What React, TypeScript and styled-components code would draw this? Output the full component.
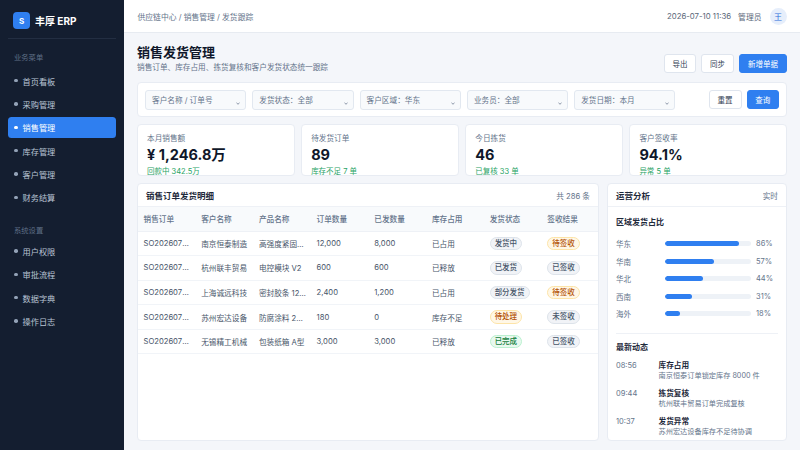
import React from 'react';
import styled, { createGlobalStyle } from 'styled-components';

const GlobalStyle = createGlobalStyle`
    html, body {
        margin: 0;
        padding: 0;
        height: 100%;
        background: #f4f6fa;
        font-family: "Inter", "Noto Sans CJK SC", sans-serif;
    }
    * { box-sizing: border-box; }
`;

const Shell = styled.div`
    display: flex;
    width: 800px;
    height: 450px;
    overflow: hidden;
`;

const Sidebar = styled.aside`
    width: 124px;
    flex: none;
    background: #141e30;
    padding: 0 8px;
`;

const Brand = styled.div`
    display: flex;
    align-items: center;
    gap: 5px;
    height: 39px;
    padding: 3px 0 0 5px;
    border-bottom: 1px solid #232e42;
    color: #fff;
    font-size: 10px;
    font-weight: 700;
`;

const LogoMark = styled.div`
    width: 17px;
    height: 17px;
    border-radius: 4px;
    background: #2f7ff0;
    color: #fff;
    font-size: 8px;
    display: flex;
    align-items: center;
    justify-content: center;
`;

const SectionLabel = styled.div<{ $top: number; $bottom: number }>`
    margin: ${p => p.$top}px 0 ${p => p.$bottom}px 6px;
    height: 12px;
    line-height: 12px;
    font-size: 7.3px;
    color: #5f6f86;
`;

const NavItem = styled.div<{ $active?: boolean }>`
    display: flex;
    align-items: center;
    gap: 5px;
    height: 21px;
    margin-bottom: 2.4px;
    padding-left: 6px;
    border-radius: 3.5px;
    font-size: 8.2px;
    color: ${p => (p.$active ? '#fff' : '#b9c4d4')};
    background: ${p => (p.$active ? '#2f7ff0' : 'transparent')};

    &::before {
        content: "";
        width: 3.5px;
        height: 3.5px;
        border-radius: 50%;
        background: ${p => (p.$active ? '#fff' : '#94a3b8')};
    }
`;

const Content = styled.div`
    flex: 1;
    min-width: 0;
    display: flex;
    flex-direction: column;
`;

const Topbar = styled.header`
    height: 33px;
    flex: none;
    background: #fff;
    border-bottom: 1px solid #e7ebf1;
    display: flex;
    align-items: center;
    padding: 0 13.5px;
    font-size: 7.8px;
    color: #64748b;
`;

const Crumbs = styled.div`
    flex: 1;
`;

const TopMeta = styled.span`
    margin-right: 7px;
    color: #5b6779;
`;

const Avatar = styled.div`
    width: 17px;
    height: 17px;
    margin-left: 1px;
    border-radius: 50%;
    background: #e6eefb;
    color: #2f6fdc;
    font-size: 8px;
    display: flex;
    align-items: center;
    justify-content: center;
`;

const Main = styled.main`
    flex: 1;
    min-height: 0;
    padding: 9px 13px 9px;
    display: flex;
    flex-direction: column;
`;

const TitleRow = styled.div`
    display: flex;
    justify-content: space-between;
    align-items: flex-end;
    height: 31px;
    flex: none;
    margin-bottom: 9px;
`;

const PageTitle = styled.h1`
    margin: 0 0 1px;
    font-size: 13px;
    line-height: 20px;
    font-weight: 700;
    color: #0f172a;
`;

const PageSub = styled.div`
    font-size: 7.65px;
    line-height: 10px;
    color: #64748b;
`;

const ButtonRow = styled.div`
    display: flex;
    gap: 5px;
`;

const Button = styled.div<{ $primary?: boolean; $w: number }>`
    width: ${p => p.$w}px;
    height: 19px;
    border-radius: 3px;
    border: 1px solid ${p => (p.$primary ? '#2f7ff0' : '#dfe5ee')};
    background: ${p => (p.$primary ? '#2f7ff0' : '#fff')};
    color: ${p => (p.$primary ? '#fff' : '#334155')};
    font-size: 7.5px;
    display: flex;
    align-items: center;
    justify-content: center;
`;

const Card = styled.section`
    background: #fff;
    border: 1px solid #e8ecf3;
    border-radius: 4px;
`;

const FilterBar = styled(Card)`
    height: 35px;
    flex: none;
    margin-bottom: 7px;
    padding: 0 7px;
    display: flex;
    align-items: center;
    gap: 6px;
`;

const Select = styled.div`
    width: 101.3px;
    height: 20px;
    padding: 0 5px 0 6px;
    background: #f8fafc;
    border: 1px solid #e2e8f0;
    border-radius: 3px;
    font-size: 7.65px;
    color: #64748b;
    display: flex;
    align-items: center;
    justify-content: space-between;

    svg {
        align-self: flex-end;
        margin-bottom: 4px;
    }
`;

const FilterActions = styled.div`
    margin-left: auto;
    display: flex;
    gap: 5px;
`;

const StatRow = styled.div`
    display: grid;
    grid-template-columns: repeat(4, 1fr);
    gap: 6.5px;
    height: 52px;
    flex: none;
    margin-bottom: 7px;
`;

const StatCard = styled(Card)`
    padding: 8.5px 9px 0;
    overflow: hidden;
`;

const StatLabel = styled.div`
    font-size: 7.65px;
    line-height: 10px;
    color: #64748b;
`;

const StatValue = styled.div`
    margin-top: 1.5px;
    font-size: 14.5px;
    line-height: 20px;
    font-weight: 700;
    color: #0f172a;
`;

const StatNote = styled.div`
    margin-top: 1.5px;
    font-size: 7.5px;
    line-height: 10px;
    color: #1fa365;
`;

const Lower = styled.div`
    flex: 1;
    min-height: 0;
    display: grid;
    grid-template-columns: 462px 180px;
    gap: 8px;
`;

const Panel = styled(Card)`
    overflow: hidden;
    display: flex;
    flex-direction: column;
`;

const PanelHead = styled.div`
    height: 23px;
    flex: none;
    display: flex;
    align-items: center;
    justify-content: space-between;
    padding: 0 8px;
    border-bottom: 1px solid #eef1f6;
    font-size: 7.65px;
    color: #64748b;
`;

const PanelTitle = styled.div`
    font-size: 8.5px;
    font-weight: 700;
    color: #1e293b;
`;

const Table = styled.table`
    width: 461.6px;
    flex: none;
    table-layout: fixed;
    border-collapse: collapse;
    font-size: 7.65px;
`;

const Th = styled.th`
    height: 24px;
    padding: 0 5px 0 5.5px;
    text-align: left;
    font-weight: 500;
    color: #64748b;
    background: #f8fafc;
    border-bottom: 1px solid #eef1f6;
`;

const Td = styled.td`
    height: 24.6px;
    padding: 0 5px 0 5.5px;
    color: #475569;
    border-bottom: 1px solid #f1f4f8;
    white-space: nowrap;
    overflow: hidden;
    text-overflow: ellipsis;
`;

const pillTones = {
    gray: { bg: '#f1f3f7', line: '#dde3ea', fg: '#475569' },
    amber: { bg: '#fff7e6', line: '#fde4a8', fg: '#b45309' },
    green: { bg: '#e8f9ef', line: '#bbf0cf', fg: '#15803d' },
};

type Tone = keyof typeof pillTones;

const Pill = styled.span<{ $tone: Tone }>`
    display: inline-block;
    height: 13.5px;
    line-height: 11.5px;
    padding: 0 4px;
    border-radius: 7px;
    font-size: 7.5px;
    font-weight: 500;
    background: ${p => pillTones[p.$tone].bg};
    border: 1px solid ${p => pillTones[p.$tone].line};
    color: ${p => pillTones[p.$tone].fg};
`;

const PanelBody = styled.div`
    padding: 9.5px 8px 0;
`;

const SubTitle = styled.div`
    font-size: 8px;
    line-height: 11px;
    font-weight: 700;
    color: #1e293b;
`;

const BarList = styled.div`
    margin-top: 7.5px;
    padding-bottom: 10px;
    border-bottom: 1px solid #eef1f6;
`;

const BarRow = styled.div`
    display: grid;
    grid-template-columns: 49px 86px 1fr;
    align-items: center;
    height: 17.5px;
    font-size: 7.5px;
    color: #64748b;
`;

const BarPct = styled.span`
    padding-left: 5px;
`;

const BarTrack = styled.div`
    height: 5px;
    border-radius: 3px;
    background: #eef2f7;
    overflow: hidden;
`;

const BarFill = styled.div`
    height: 100%;
    border-radius: 3px;
    background: #2f7ff0;
`;

const FeedTitle = styled(SubTitle)`
    margin-top: 8.5px;
    margin-bottom: 6.5px;
`;

const FeedItem = styled.div`
    display: grid;
    grid-template-columns: 42.5px 1fr;
    height: 28px;
`;

const FeedTime = styled.div`
    font-size: 7.5px;
    line-height: 11px;
    color: #64748b;
`;

const FeedName = styled.div`
    font-size: 7.65px;
    line-height: 11px;
    font-weight: 700;
    color: #1e293b;
`;

const FeedText = styled.div`
    font-size: 7.2px;
    line-height: 10px;
    color: #64748b;
`;

const Chevron = () => (
    <svg width="4" height="3" viewBox="0 0 4 3" fill="none">
        <path d="M0.5 0.6 L2 2.3 L3.5 0.6" stroke="#64748b" strokeWidth="0.7" />
    </svg>
);

const orders: { no: string; customer: string; product: string; qty: string; sent: string; stock: string; status: [string, Tone]; sign: [string, Tone] }[] = [
    { no: 'SO20260710001', customer: '南京恒泰制造', product: '高强度紧固件 M8', qty: '12,000', sent: '8,000', stock: '已占用', status: ['发货中', 'gray'], sign: ['待签收', 'amber'] },
    { no: 'SO20260710002', customer: '杭州联丰贸易', product: '电控模块 V2', qty: '600', sent: '600', stock: '已释放', status: ['已发货', 'gray'], sign: ['已签收', 'gray'] },
    { no: 'SO20260710003', customer: '上海诚远科技', product: '密封胶条 12米', qty: '2,400', sent: '1,200', stock: '已占用', status: ['部分发货', 'gray'], sign: ['待签收', 'amber'] },
    { no: 'SO20260710004', customer: '苏州宏达设备', product: '防腐涂料 20KG', qty: '180', sent: '0', stock: '库存不足', status: ['待处理', 'amber'], sign: ['未签收', 'gray'] },
    { no: 'SO20260710005', customer: '无锡精工机械', product: '包装纸箱 A型', qty: '3,000', sent: '3,000', stock: '已释放', status: ['已完成', 'green'], sign: ['已签收', 'gray'] },
];

const regions = [
    { name: '华东', pct: 86 },
    { name: '华南', pct: 57 },
    { name: '华北', pct: 44 },
    { name: '西南', pct: 31 },
    { name: '海外', pct: 18 },
];

const feed = [
    { time: '08:56', name: '库存占用', text: '南京恒泰订单锁定库存 8000 件' },
    { time: '09:44', name: '拣货复核', text: '杭州联丰贸易订单完成复核' },
    { time: '10:37', name: '发货异常', text: '苏州宏达设备库存不足待协调' },
];

const stats = [
    { label: '本月销售额', value: '¥ 1,246.8万', note: '回款中 342.5万' },
    { label: '待发货订单', value: '89', note: '库存不足 7 单' },
    { label: '今日拣货', value: '46', note: '已复核 33 单' },
    { label: '客户签收率', value: '94.1%', note: '异常 5 单' },
];

export default function App() {
    return (
        <Shell>
            <GlobalStyle />
            <Sidebar>
                <Brand>
                    <LogoMark>S</LogoMark>
                    丰厚 ERP
                </Brand>
                <SectionLabel $top={13} $bottom={6}>业务菜单</SectionLabel>
                {['首页看板', '采购管理', '销售管理', '库存管理', '客户管理', '财务结算'].map(n => (
                    <NavItem key={n} $active={n === '销售管理'}>{n}</NavItem>
                ))}
                <SectionLabel $top={17} $bottom={3.5}>系统设置</SectionLabel>
                {['用户权限', '审批流程', '数据字典', '操作日志'].map(n => (
                    <NavItem key={n}>{n}</NavItem>
                ))}
            </Sidebar>
            <Content>
                <Topbar>
                    <Crumbs>供应链中心 / 销售管理 / 发货跟踪</Crumbs>
                    <TopMeta>2026-07-10 11:36</TopMeta>
                    <TopMeta>管理员</TopMeta>
                    <Avatar>王</Avatar>
                </Topbar>
                <Main>
                    <TitleRow>
                        <div>
                            <PageTitle>销售发货管理</PageTitle>
                            <PageSub>销售订单、库存占用、拣货复核和客户发货状态统一跟踪</PageSub>
                        </div>
                        <ButtonRow>
                            <Button $w={32}>导出</Button>
                            <Button $w={33}>同步</Button>
                            <Button $w={48} $primary>新增单据</Button>
                        </ButtonRow>
                    </TitleRow>
                    <FilterBar>
                        {['客户名称 / 订单号', '发货状态：全部', '客户区域：华东', '业务员：全部', '发货日期：本月'].map(s => (
                            <Select key={s}>{s}<Chevron /></Select>
                        ))}
                        <FilterActions>
                            <Button $w={33}>重置</Button>
                            <Button $w={32.5} $primary>查询</Button>
                        </FilterActions>
                    </FilterBar>
                    <StatRow>
                        {stats.map(s => (
                            <StatCard key={s.label}>
                                <StatLabel>{s.label}</StatLabel>
                                <StatValue>{s.value}</StatValue>
                                <StatNote>{s.note}</StatNote>
                            </StatCard>
                        ))}
                    </StatRow>
                    <Lower>
                        <Panel>
                            <PanelHead>
                                <PanelTitle>销售订单发货明细</PanelTitle>
                                共 286 条
                            </PanelHead>
                            <Table>
                                <thead>
                                    <tr>
                                        {['销售订单', '客户名称', '产品名称', '订单数量', '已发数量', '库存占用', '发货状态', '签收结果'].map(h => (
                                            <Th key={h}>{h}</Th>
                                        ))}
                                    </tr>
                                </thead>
                                <tbody>
                                    {orders.map(o => (
                                        <tr key={o.no}>
                                            <Td>{o.no}</Td>
                                            <Td>{o.customer}</Td>
                                            <Td>{o.product}</Td>
                                            <Td>{o.qty}</Td>
                                            <Td>{o.sent}</Td>
                                            <Td>{o.stock}</Td>
                                            <Td><Pill $tone={o.status[1]}>{o.status[0]}</Pill></Td>
                                            <Td><Pill $tone={o.sign[1]}>{o.sign[0]}</Pill></Td>
                                        </tr>
                                    ))}
                                </tbody>
                            </Table>
                        </Panel>
                        <Panel>
                            <PanelHead>
                                <PanelTitle>运营分析</PanelTitle>
                                实时
                            </PanelHead>
                            <PanelBody>
                                <SubTitle>区域发货占比</SubTitle>
                                <BarList>
                                    {regions.map(r => (
                                        <BarRow key={r.name}>
                                            <span>{r.name}</span>
                                            <BarTrack>
                                                <BarFill style={{ width: `${r.pct}%` }} />
                                            </BarTrack>
                                            <BarPct>{r.pct}%</BarPct>
                                        </BarRow>
                                    ))}
                                </BarList>
                                <FeedTitle>最新动态</FeedTitle>
                                {feed.map(f => (
                                    <FeedItem key={f.time}>
                                        <FeedTime>{f.time}</FeedTime>
                                        <div>
                                            <FeedName>{f.name}</FeedName>
                                            <FeedText>{f.text}</FeedText>
                                        </div>
                                    </FeedItem>
                                ))}
                            </PanelBody>
                        </Panel>
                    </Lower>
                </Main>
            </Content>
        </Shell>
    );
}
